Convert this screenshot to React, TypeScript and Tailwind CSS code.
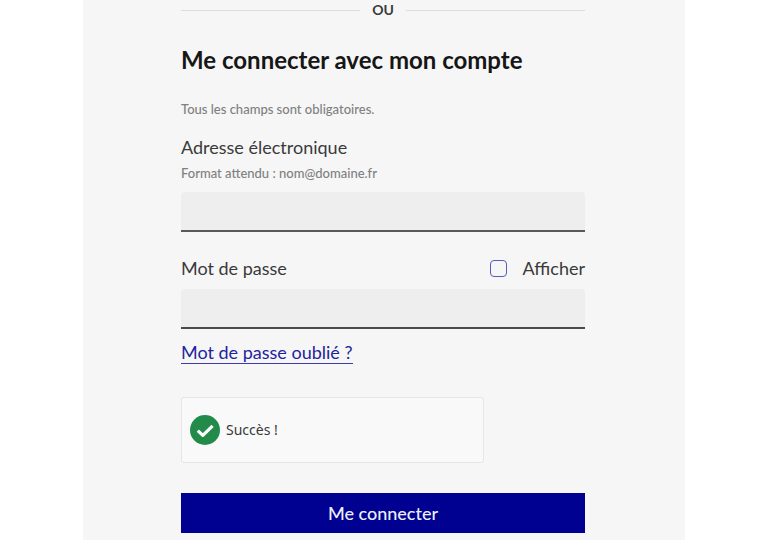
import { useState } from "react";

export default function App() {
  const [visible, setVisible] = useState(false);

  return (
    <div className="min-h-screen bg-white px-[83px] font-['Lato','Open_Sans',sans-serif] text-[18px] leading-6 text-[#3a3a3a]">
      <main className="mx-auto min-h-screen max-w-[602px] bg-[#f6f6f6] pr-[100px] pb-[7px] pl-[98px]">
        <div className="flex items-center gap-3 text-sm leading-5 font-bold">
          <span className="h-px flex-1 bg-[#dddddd]" />
          <span>OU</span>
          <span className="h-px flex-1 bg-[#dddddd]" />
        </div>

        <h1 className="mt-6 text-2xl leading-8 font-bold whitespace-nowrap text-[#161616]">
          Me connecter avec mon compte
        </h1>

        <form onSubmit={(event) => event.preventDefault()}>
          <p className="mt-[23px] text-[13px] leading-5 font-medium text-[#808080]">
            Tous les champs sont obligatoires.
          </p>

          <label htmlFor="email" className="mt-4 block">
            Adresse électronique
          </label>
          <p id="email-hint" className="mt-1 text-[13px] leading-5 font-medium text-[#808080]">
            Format attendu : nom@domaine.fr
          </p>
          <input
            id="email"
            type="email"
            aria-describedby="email-hint"
            className="mt-[9px] block h-10 w-full rounded-t border-b-2 border-[#5a5a5a] bg-[#eeeeee] px-4 outline-none"
          />

          <div className="mt-6 flex items-center justify-between">
            <label htmlFor="password">Mot de passe</label>
            <div className="flex items-center gap-4">
              <input
                id="show-password"
                type="checkbox"
                checked={visible}
                onChange={(event) => setVisible(event.target.checked)}
                className="size-[17px] appearance-none rounded border border-[#5a5abf] checked:bg-[#000091]"
              />
              <label htmlFor="show-password">Afficher</label>
            </div>
          </div>
          <input
            id="password"
            type={visible ? "text" : "password"}
            className="mt-[9px] block h-10 w-full rounded-t border-b-2 border-[#4a4a4a] bg-[#eeeeee] px-4 outline-none"
          />

          <a href="#oubli" className="mt-3 inline-block border-b border-[#3c3cae] leading-[22px] text-[#2323a0]">
            Mot de passe oublié ?
          </a>

          <div
            role="status"
            className="mt-[33px] flex h-[66px] w-3/4 items-center gap-1.5 rounded-[3px] border border-[#e6e6e6] bg-[#f9f9f9] px-2 font-['Noto_Sans','Open_Sans',sans-serif] text-sm"
          >
            <svg viewBox="0 0 30 30" className="size-[30px]" aria-hidden="true">
              <circle cx="15" cy="15" r="15" fill="#228b49" />
              <path
                d="M7.8 15.6 L12.8 20.4 L22.6 10.8"
                fill="none"
                stroke="#fff"
                strokeWidth="3.2"
                strokeLinejoin="round"
              />
            </svg>
            <span>Succès !</span>
          </div>

          <button type="submit" className="mt-[30px] h-10 w-full bg-[#000091] font-medium text-[#eeeef8]">
            Me connecter
          </button>
        </form>
      </main>
    </div>
  );
}
